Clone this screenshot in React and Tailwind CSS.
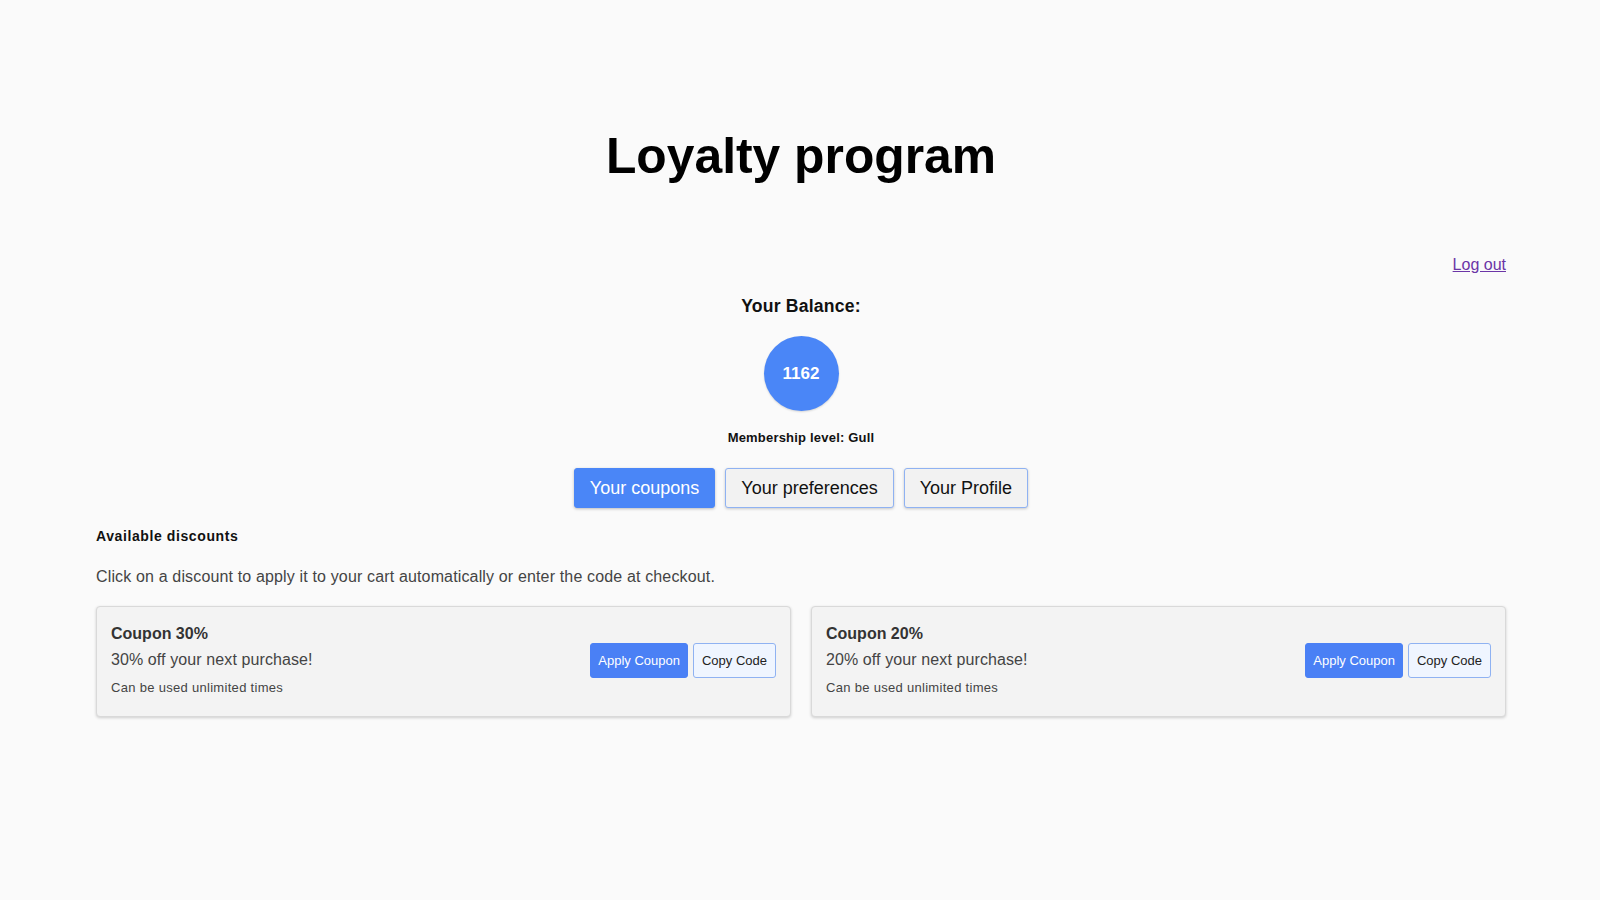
import React from "react";

const coupons = [
  { id: 1, title: "Coupon 30%", text: "30% off your next purchase!", usage: "Can be used unlimited times" },
  { id: 2, title: "Coupon 20%", text: "20% off your next purchase!", usage: "Can be used unlimited times" },
];

const tabs = ["Your coupons", "Your preferences", "Your Profile"];

export default function App() {
  const active = "Your coupons";

  return (
    <div className="min-h-screen bg-[#fafafa] text-black font-['Liberation_Sans',Arial,sans-serif]">
      <div className="pl-[96px] pr-[94px] pt-[128px] pb-16">
        <h1 className="text-center text-[49.8px] leading-[56px] font-bold">
          Loyalty program
        </h1>

        <div className="mt-[72px] flex justify-end">
          <a href="#" className="text-[16px] leading-[18px] text-[#6b35a6] underline">
            Log out
          </a>
        </div>

        <div className="mt-[22px] flex flex-col items-center">
          <h2 className="text-[17.6px] leading-[20px] font-bold tracking-[0.2px] text-[#111]">
            Your Balance:
          </h2>
          <div className="mt-[20px] flex h-[75px] w-[75px] items-center justify-center rounded-full bg-[#4a86f7] shadow-[0_1px_2px_rgba(0,0,0,0.15)]">
            <span className="text-[17px] font-bold text-white">1162</span>
          </div>
          <p className="mt-[19px] text-[13px] leading-[15px] font-bold tracking-[0.2px] text-[#111]">
            Membership level: Gull
          </p>

          <div className="mt-[23px] flex gap-[10px]">
            {tabs.map((t) => (
              <button
                key={t}
                type="button"
                className={
                  t === active
                    ? "h-10 px-[15px] rounded-[3px] border border-[#4a86f7] bg-[#4a86f7] text-[18px] text-white shadow-[0_1px_3px_rgba(0,0,0,0.25)]"
                    : "h-10 px-[15px] rounded-[3px] border border-[#8fb2f2] bg-[#f2f2f2] text-[18px] text-[#111] shadow-[0_1px_3px_rgba(0,0,0,0.2)]"
                }
              >
                {t}
              </button>
            ))}
          </div>
        </div>

        <h3 className="mt-[20px] text-[14px] leading-[16px] font-bold tracking-[0.6px] text-[#111]">
          Available discounts
        </h3>
        <p className="mt-[24px] text-[16px] leading-[18px] tracking-[0.15px] text-[#444]">
          Click on a discount to apply it to your cart automatically or enter the code at checkout.
        </p>

        <div className="mt-[20px] grid grid-cols-2 gap-[20px]">
          {coupons.map((c) => (
            <div
              key={c.id}
              className="flex items-center justify-between rounded-[4px] border border-[#d9d9d9] bg-[#f3f3f3] pt-[18px] pb-[20px] pl-[14px] pr-[14px] shadow-[0_1px_3px_rgba(0,0,0,0.18)]"
            >
              <div>
                <p className="text-[16px] leading-[18px] font-bold text-[#333]">{c.title}</p>
                <p className="mt-[7px] text-[16px] leading-[20px] tracking-[0.1px] text-[#444]">{c.text}</p>
                <p className="mt-[10px] text-[13px] leading-[16px] tracking-[0.3px] text-[#444]">{c.usage}</p>
              </div>
              <div className="flex gap-[5px]">
                <button
                  type="button"
                  className="h-[35px] px-[7px] rounded-[3px] border border-[#4a80f5] bg-[#4a80f5] text-[13px] text-white"
                >
                  Apply Coupon
                </button>
                <button
                  type="button"
                  className="h-[35px] px-[8px] rounded-[3px] border border-[#8fb2f2] bg-[#eff5ff] text-[13px] text-[#222]"
                >
                  Copy Code
                </button>
              </div>
            </div>
          ))}
        </div>
      </div>
    </div>
  );
}
